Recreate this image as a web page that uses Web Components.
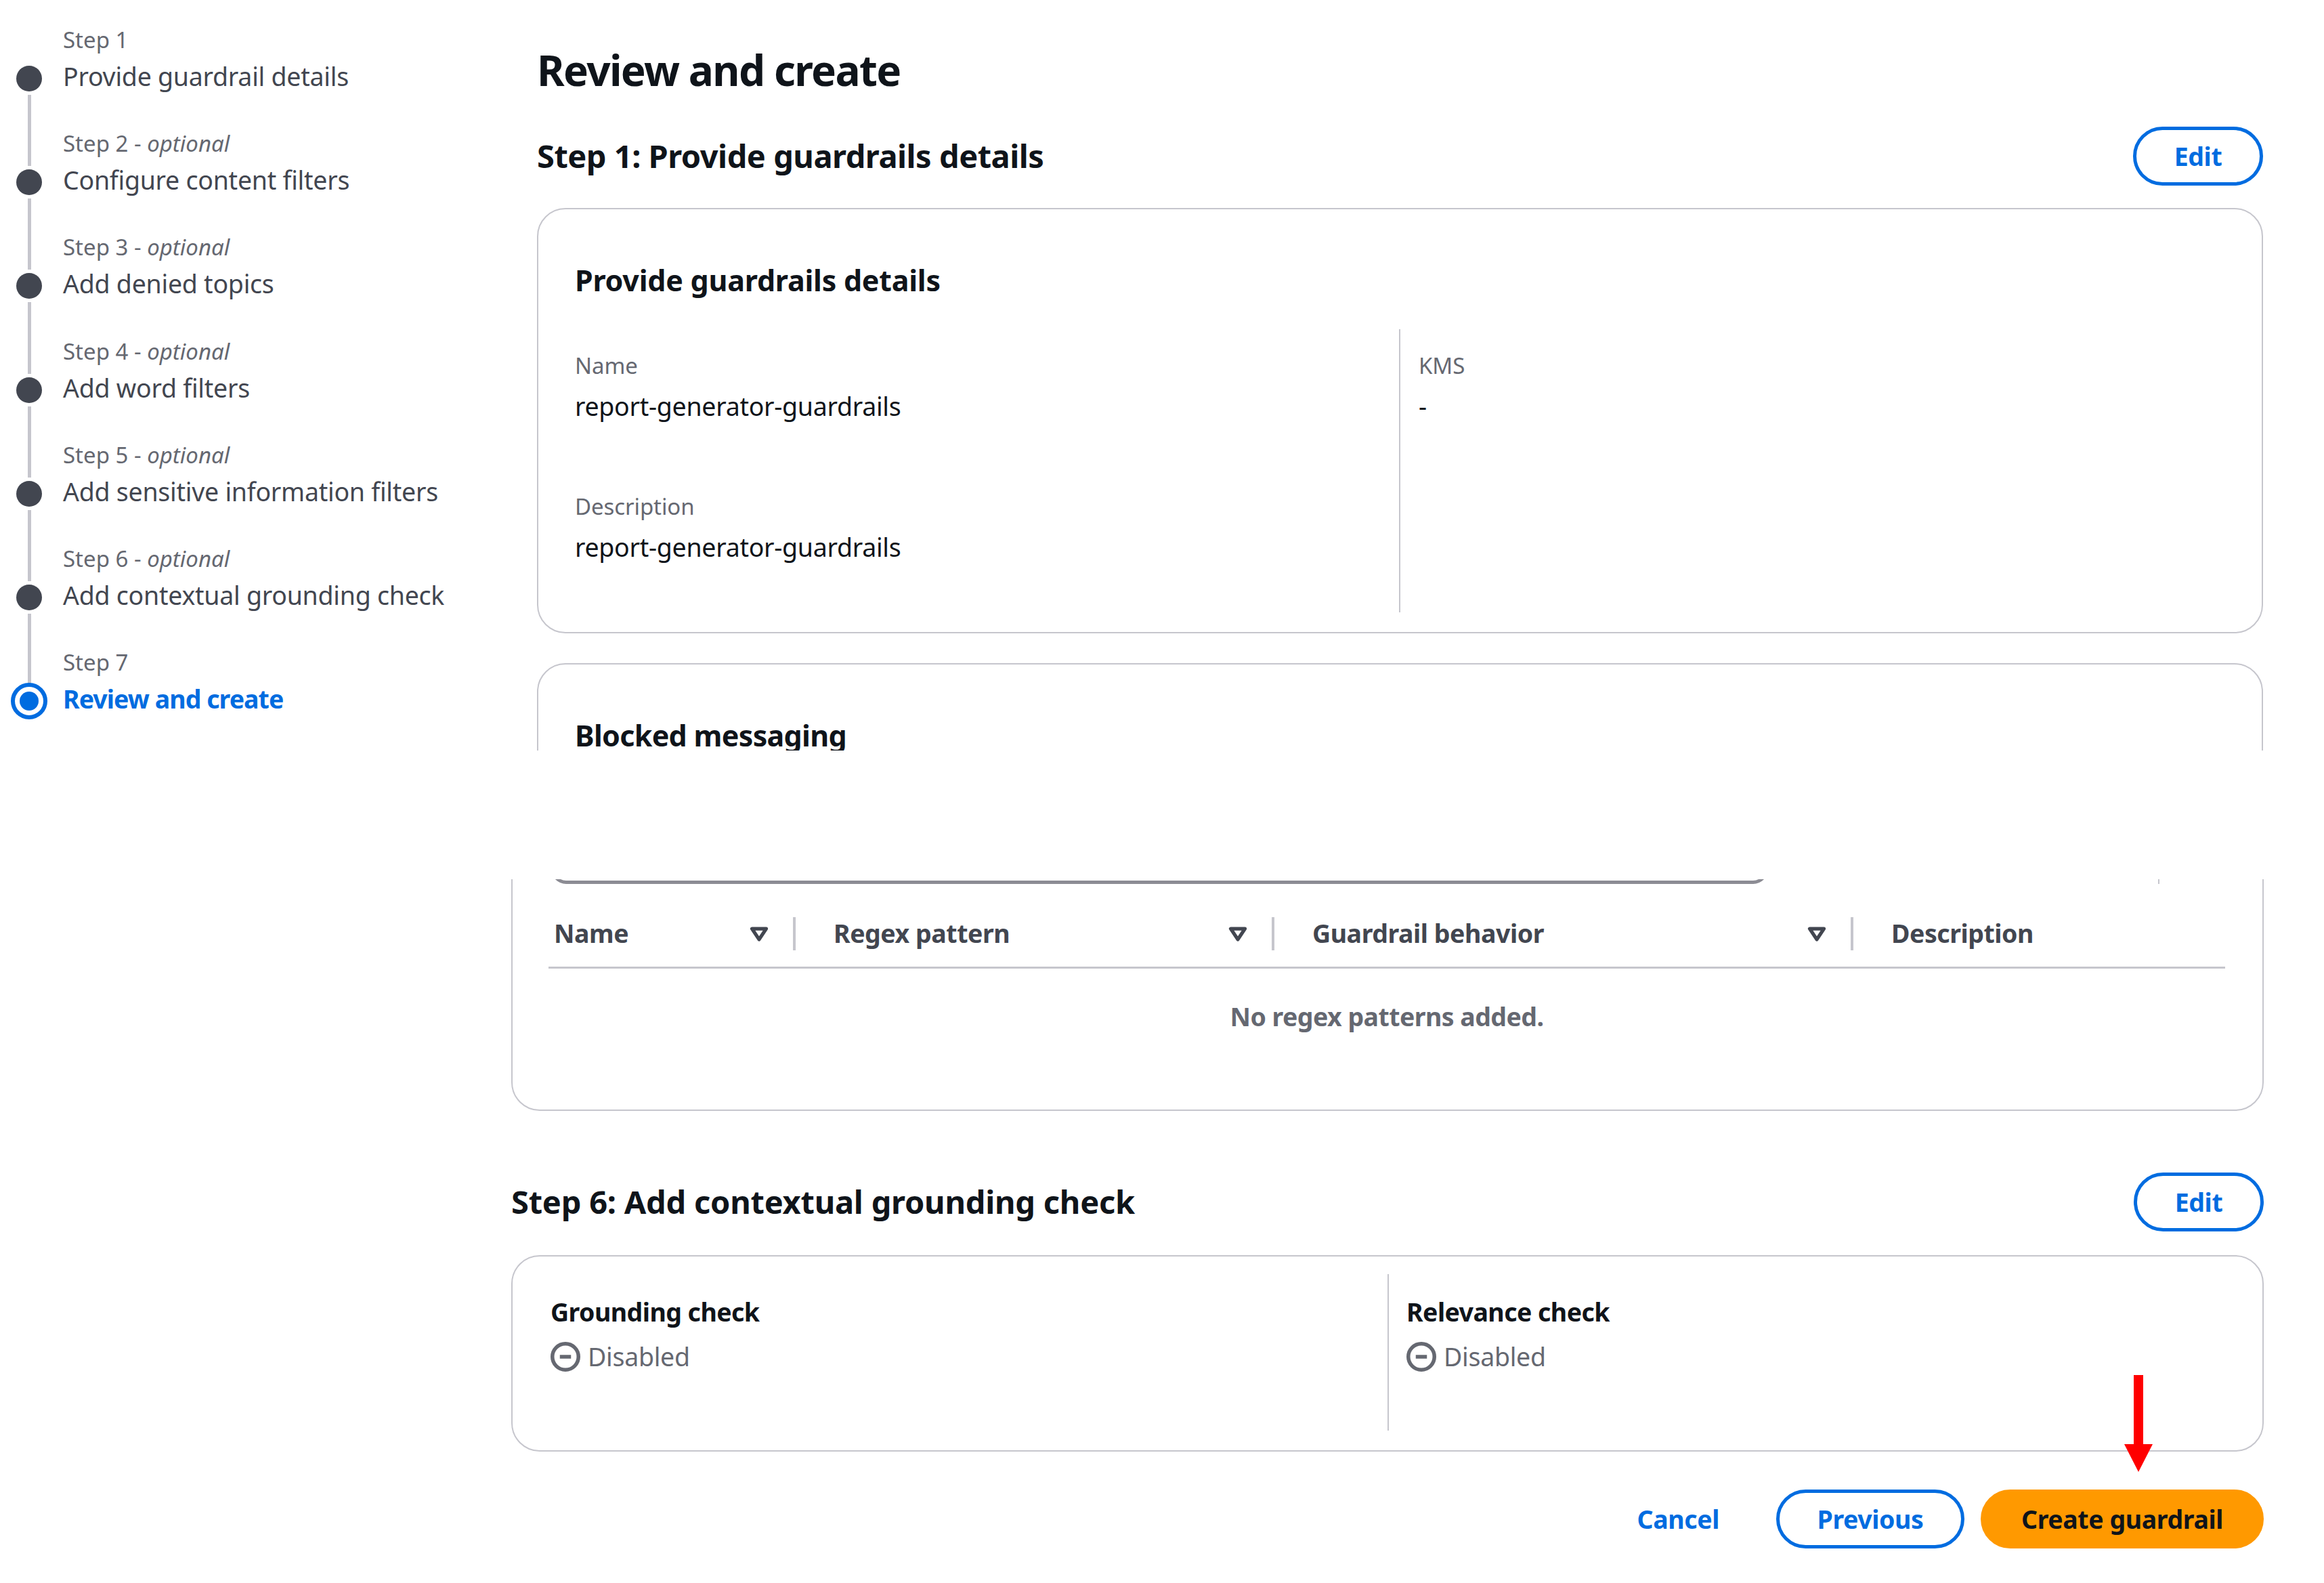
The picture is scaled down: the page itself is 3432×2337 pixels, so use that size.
<!DOCTYPE html>
<html lang="en"><head><meta charset="utf-8"><title>Review and create</title>
<style>
html,body{margin:0;padding:0;background:#fff}
body{font-family:"Noto Sans","Liberation Sans",sans-serif;color:#0f141a}
</style></head>
<body>
<x-page>
  <x-top slot="top">
    <x-wizard slot="nav">
      <x-step first><span slot="label">Step 1</span>Provide guardrail details</x-step>
      <x-step><span slot="label">Step 2 - <i>optional</i></span>Configure content filters</x-step>
      <x-step><span slot="label">Step 3 - <i>optional</i></span>Add denied topics</x-step>
      <x-step><span slot="label">Step 4 - <i>optional</i></span>Add word filters</x-step>
      <x-step><span slot="label">Step 5 - <i>optional</i></span>Add sensitive information filters</x-step>
      <x-step><span slot="label">Step 6 - <i>optional</i></span>Add contextual grounding check</x-step>
      <x-step active><span slot="label">Step 7</span>Review and create</x-step>
    </x-wizard>
    <x-h1>Review and create</x-h1>
    <x-section-head>Step 1: Provide guardrails details</x-section-head>
    <x-card>
      <x-card-title>Provide guardrails details</x-card-title>
      <x-kv-grid>
        <x-kv-col>
          <x-kv><span slot="k">Name</span>report-generator-guardrails</x-kv>
          <x-kv><span slot="k">Description</span>report-generator-guardrails</x-kv>
        </x-kv-col>
        <x-kv-col divider>
          <x-kv><span slot="k">KMS</span>-</x-kv>
        </x-kv-col>
      </x-kv-grid>
    </x-card>
    <x-card second>
      <x-card-title tight>Blocked messaging</x-card-title>
    </x-card>
  </x-top>
  <x-bottom slot="bottom">
    <x-regex-card>
      <x-th>Name</x-th>
      <x-th>Regex pattern</x-th>
      <x-th>Guardrail behavior</x-th>
      <x-th last>Description</x-th>
      <span slot="empty">No regex patterns added.</span>
    </x-regex-card>
    <x-section-head lower>Step 6: Add contextual grounding check</x-section-head>
    <x-check-card>
      <x-check>Grounding check</x-check>
      <x-check divider>Relevance check</x-check>
    </x-check-card>
    <x-actions>
      <x-btn link>Cancel</x-btn>
      <x-btn secondary>Previous</x-btn>
      <x-btn primary>Create guardrail</x-btn>
    </x-actions>
  </x-bottom>
  <x-arrow slot="overlay"></x-arrow>
</x-page>
<script>
function def(name, html){
  customElements.define(name, class extends HTMLElement{
    constructor(){super();const r=this.attachShadow({mode:'open'});const t=document.createElement('template');t.innerHTML=html;r.appendChild(t.content.cloneNode(true));}
  });
}
const caret='<svg viewBox="0 0 16 16" width="42" height="42" fill="none" stroke="#424650" stroke-width="2" stroke-linejoin="round"><path d="M4 5h8l-4 6-4-6z"/></svg>';
def('x-page',`<style>:host{display:block;position:relative;width:3432px;height:2337px;overflow:hidden;background:#fff}
.gap{height:190px}.ov{position:absolute;left:3137px;top:2030px}</style>
<slot name="top"></slot><div class="gap"></div><slot name="bottom"></slot><div class="ov"><slot name="overlay"></slot></div>`);
def('x-top',`<style>:host{display:flex;height:1108px;overflow:hidden}
.nav{width:793px;flex:none}.main{flex:1;min-width:0;padding-right:90px}</style>
<div class="nav"><slot name="nav"></slot></div><div class="main"><slot></slot></div>`);
def('x-wizard',`<style>:host{display:flex;flex-direction:column}</style><slot></slot>`);
def('x-step',`<style>:host{display:grid;grid-template-columns:93px 1fr;color:#424650}
.rail{display:flex;flex-direction:column;align-items:center;width:86px}
.line{width:5px;height:105.2px;margin-bottom:5px;background:#c6c6cd}
:host([first]) .line{height:92px;visibility:hidden}
.dot{width:38px;height:38px;margin-bottom:5px;border-radius:50%;background:#424650;flex:none;position:relative}
:host([active]) .dot{background:none}
:host([active]) .dot::before{content:"";position:absolute;left:-8px;top:-8px;width:54px;height:54px;box-sizing:border-box;border:6.5px solid #006ce0;border-radius:50%}
:host([active]) .dot::after{content:"";position:absolute;left:5px;top:5px;width:28px;height:28px;background:#006ce0;border-radius:50%}
.text{display:flex;flex-direction:column;justify-content:flex-end;white-space:nowrap;padding-bottom:3px}
.label{font-size:33px;line-height:40px;margin-bottom:10px;color:#656871;letter-spacing:0}
.title{font-size:37.5px;line-height:48px;letter-spacing:-.25px}
:host([active]) .title{color:#006ce0;font-weight:700;letter-spacing:-.95px}
</style><div class="rail"><div class="line"></div><div class="dot"></div></div>
<div class="text"><div class="label"><slot name="label"></slot></div><div class="title"><slot></slot></div></div>`);
def('x-h1',`<style>:host{display:block;padding-top:63px;font-size:62px;line-height:80px;font-weight:700;letter-spacing:-1.65px;margin-bottom:44px}</style><slot></slot>`);
def('x-btn',`<style>:host{display:inline-flex;align-items:center;justify-content:center;box-sizing:border-box;height:87px;padding:0 54px;border:5px solid #006ce0;border-radius:44px;color:#006ce0;font-size:37.5px;font-weight:700;letter-spacing:-.4px;white-space:nowrap;background:#fff}
:host([primary]){background:#ff9900;border-color:#ff9900;color:#0f141a;width:418px;padding:0}
:host([secondary]){width:278px;padding:0}
:host([link]){border-color:transparent;padding:0;margin-right:55px;background:none}
:host([small]){width:192px;padding:0}</style><slot></slot>`);
def('x-section-head',`<style>:host{display:flex;align-items:center;justify-content:space-between;height:86px;margin-bottom:34px;font-size:47px;font-weight:700;letter-spacing:-.5px}
:host([lower]){margin-top:90px;height:88px;margin-bottom:35px;letter-spacing:-.23px}</style><slot></slot><x-btn small>Edit</x-btn>`);
def('x-card',`<style>:host{display:block;box-sizing:border-box;height:628px;border:2px solid #c6c6cd;border-radius:42px;padding:77px 54px 0;margin-bottom:44px;overflow:hidden}
:host([second]){height:400px}</style><slot></slot>`);
def('x-card-title',`<style>:host{display:block;font-size:43px;line-height:56px;font-weight:700;letter-spacing:-.24px;margin-bottom:44px}
:host([tight]){letter-spacing:-.7px}</style><slot></slot>`);
def('x-kv-grid',`<style>:host{display:grid;grid-template-columns:1217px 1fr;height:418px}</style><slot></slot>`);
def('x-kv-col',`<style>:host{display:flex;flex-direction:column;gap:104px;padding-top:34px}
:host([divider]){border-left:2px solid #c6c6cd;padding-left:27px}</style><slot></slot>`);
def('x-kv',`<style>:host{display:block;white-space:nowrap}
.k{font-size:33px;line-height:40px;color:#656871;margin-bottom:16px;letter-spacing:-.1px}
.v{font-size:37.5px;line-height:48px;color:#0f141a;letter-spacing:-.28px}</style>
<div class="k"><slot name="k"></slot></div><div class="v"><slot></slot></div>`);
def('x-bottom',`<style>:host{display:block;height:1039px;overflow:hidden;padding:0 89px 0 755px;box-sizing:border-box}</style><slot></slot>`);
def('x-regex-card',`<style>:host{display:block;box-sizing:border-box;height:382px;margin-top:-40px;border:2px solid #c6c6cd;border-radius:42px;padding:38px 0 0}
.clip{display:flex;height:7px;padding-left:57px}
.input{flex:none;box-sizing:border-box;width:1797px;height:60px;margin-top:-53px;border:5px solid #8c8c94;border-radius:22px}
.tick{width:2px;height:7px;margin-left:576px;background:#c6c6cd}
.table{margin:0 55px 0 53px}
.head{display:grid;grid-template-columns:365px 707px 855px 1fr;padding:49px 0 24px;border-bottom:3px solid #c6c6cd}
.empty{margin-top:47px;text-align:center;font-size:37.5px;line-height:48px;font-weight:700;color:#656871;letter-spacing:-.55px}
</style><div class="clip"><div class="input"></div><div class="tick"></div></div>
<div class="table"><div class="head"><slot></slot></div><div class="empty"><slot name="empty"></slot></div></div>`);
def('x-th',`<style>:host{display:flex;align-items:center;justify-content:space-between;box-sizing:border-box;height:49px;padding-left:56px;padding-right:29px;border-right:4px solid #c6c6cd;font-size:37.5px;font-weight:700;color:#424650;letter-spacing:-.45px;white-space:nowrap}
:host(:first-child){padding-left:8px}
:host([last]){border-right:0}
:host([last]) svg{display:none}
span{margin-top:-3px}
svg{flex:none}</style><span><slot></slot></span>${caret}`);
def('x-check-card',`<style>:host{display:grid;grid-template-columns:1236px 1fr;box-sizing:border-box;height:290px;border:2px solid #c6c6cd;border-radius:42px;padding:26px 0 29px 56px}</style><slot></slot>`);
def('x-check',`<style>:host{display:block;padding-top:32px;white-space:nowrap}
:host([divider]){border-left:2px solid #c6c6cd;padding-left:26px}
.t{font-size:37.5px;line-height:48px;font-weight:700;letter-spacing:-.55px;margin-bottom:18px}
.s{display:flex;align-items:center;gap:11px;font-size:37.5px;line-height:48px;color:#656871;letter-spacing:-.28px}
svg{flex:none}</style>
<div class="t"><slot></slot></div>
<div class="s"><svg viewBox="0 0 16 16" width="44" height="44" fill="none" stroke="#656871" stroke-width="2"><circle cx="8" cy="8" r="7"/><path d="M5 8h6"/></svg><span>Disabled</span></div>`);
def('x-actions',`<style>:host{display:flex;justify-content:flex-end;gap:24px;margin-top:56px}</style><slot></slot>`);
def('x-arrow',`<style>:host{display:block;width:42px;height:143px}svg{display:block}</style><svg width="42" height="143" viewBox="0 0 42 143"><path fill="#ff0000" d="M14 0h14v102h14L21 143 0 102h14z"/></svg>`);
</script>
</body></html>
